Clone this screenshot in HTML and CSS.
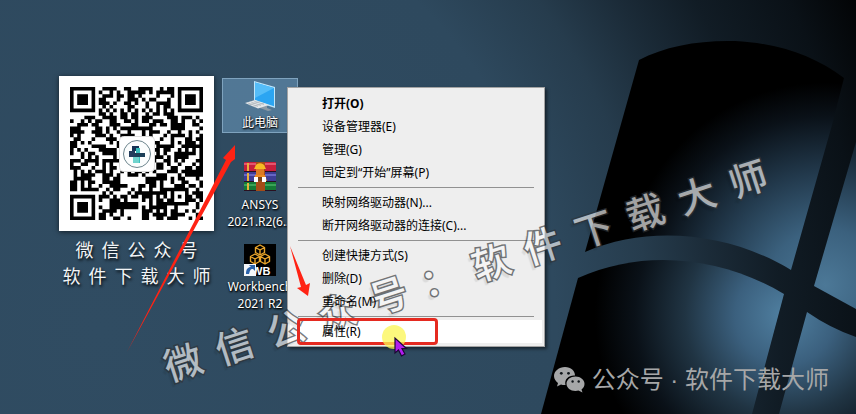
FILE: index.html
```html
<!DOCTYPE html>
<html lang="zh-CN">
<head>
    <meta charset="UTF-8">
    <meta name="viewport" content="width=device-width, initial-scale=1.0">
    <title>此电脑 - 属性</title>
    <link rel="stylesheet" href="styles.css">
</head>
<body>
    <main class="desktop">
        <svg class="wallpaper" viewBox="0 0 856 414" preserveAspectRatio="xMidYMid slice" aria-hidden="true">
            <defs>
                <radialGradient id="sky" gradientUnits="userSpaceOnUse" cx="100" cy="330" r="830">
                    <stop offset="0" stop-color="#304c62"/>
                    <stop offset="0.55" stop-color="#2e495e"/>
                    <stop offset="0.66" stop-color="#263c4d"/>
                    <stop offset="0.74" stop-color="#1b2b38"/>
                    <stop offset="0.82" stop-color="#111c25"/>
                    <stop offset="0.92" stop-color="#0a1117"/>
                    <stop offset="1" stop-color="#020304"/>
                </radialGradient>
                <radialGradient id="glow" gradientUnits="userSpaceOnUse" cx="825" cy="285" r="225">
                    <stop offset="0" stop-color="#4c7897"/>
                    <stop offset="0.25" stop-color="#3b617e"/>
                    <stop offset="0.5" stop-color="#22394c"/>
                    <stop offset="0.75" stop-color="#0a1118"/>
                    <stop offset="0.9" stop-color="#000"/>
                </radialGradient>
                <radialGradient id="glowLow" gradientUnits="userSpaceOnUse" cx="785" cy="315" r="200">
                    <stop offset="0" stop-color="#5080a1"/>
                    <stop offset="0.25" stop-color="#3b607e"/>
                    <stop offset="0.5" stop-color="#203443"/>
                    <stop offset="0.75" stop-color="#0a1118"/>
                    <stop offset="0.95" stop-color="#000"/>
                </radialGradient>
            </defs>
            <rect width="856" height="414" fill="url(#sky)"/>
            <path d="M639 60C665 46 700 40 735 41C778 43 815 56 844 78L832 125L791 270C730 233 650 224 585 252Z" fill="url(#glow)"/>
            <path d="M578 278C645 248 722 257 784 294L752 414H541Z" fill="url(#glowLow)"/>
            <path d="M856 142L814 286L856 309Z" fill="url(#glow)"/>
            <path d="M807 312Q830 328 856 337V414H779Z" fill="url(#glowLow)"/>
        </svg>

        <figure class="qr-card">
            <div class="qr-box">
                <svg class="qr-code" id="qrCode" viewBox="0 0 37 37" role="img" aria-label="微信公众号二维码"></svg>
                <svg class="qr-logo" viewBox="0 0 36 36" aria-hidden="true">
                    <rect x="0.5" y="0.5" width="35" height="35" rx="4" fill="#fff" stroke="#ddd"/>
                    <circle cx="18" cy="18" r="13.5" fill="#fbfdfd" stroke="#6d858d"/>
                    <path d="M13 10h7v5h-7z" fill="#153355"/>
                    <path d="M10 15h6v6h-6z" fill="#233c5c"/>
                    <path d="M17 12h4v15h-4z" fill="#38bdbb"/>
                    <path d="M16 17h10v4h-10z" fill="#1c3f57"/>
                    <path d="M14 21h6v6h-6z" fill="#70d4ce"/>
                </svg>
            </div>
            <figcaption class="qr-caption">
                <div class="caption-row"><span>微</span><span>信</span><span>公</span><span>众</span><span>号</span></div>
                <div class="caption-row"><span>软</span><span>件</span><span>下</span><span>载</span><span>大</span><span>师</span></div>
            </figcaption>
        </figure>

        <div class="icons">
            <button class="icon selected" type="button">
                <svg viewBox="0 0 32 32" aria-hidden="true">
                    <path d="M10 1l21 6v21l-21-7z" fill="#bfe6fb"/>
                    <path d="M11 2.5l19 5.4v18.3l-19-6.2z" fill="#2ba5f2"/>
                    <path d="M11 2.5l19 5.4-19 10z" fill="#55bdf8"/>
                    <path d="M18 24l5 1.500v2.500l5 2-4 1-8-3z" fill="#8e9ba6"/>
                    <path d="M1 23l10-3 14 5-11 3.500z" fill="#e4e7ea"/>
                    <path d="M4 23l10 3.500M7 22l10 3.600M10 21l10 3.600M5 25l11-3.500M9 26.500l11-3.500" stroke="#a3abb2" stroke-width="0.6"/>
                </svg>
                <span>此电脑</span>
            </button>
            <button class="icon" type="button">
                <svg viewBox="0 0 32 32" aria-hidden="true">
                    <rect y="0" width="32" height="10" rx="1" fill="#c51f3c"/>
                    <rect y="1" width="32" height="2" fill="#e2566d"/>
                    <rect y="10" width="32" height="10" rx="1" fill="#3d3d96"/>
                    <rect y="12" width="32" height="2" fill="#6666c4"/>
                    <rect y="20" width="32" height="9" rx="1" fill="#157a35"/>
                    <rect y="22" width="32" height="2" fill="#3ba357"/>
                    <path d="M0 9.500h32M0 19.500h32M0 28.500h32" stroke="#2a1020"/>
                    <path d="M4 1v8M4 11v8M4 21v7" stroke="#e8b23c" stroke-width="2"/>
                    <path d="M12 0h9v29h-9z" fill="#a54c17"/>
                    <path d="M11 5c1-5 9-5 10 0l1 2h-12z" fill="#f6ba23"/>
                    <path d="M12 7h8v6h-8z" fill="#dc7b23"/>
                    <path d="M11 13h10l2 6h-13z" fill="#eb8a22"/>
                    <path d="M10 15h4v5h-4zM18 15h4v5h-4z" fill="#fff"/>
                    <path d="M14 15h4v4h-4z" fill="#754118"/>
                </svg>
                <span>ANSYS<br>2021.R2(6...</span>
            </button>
            <button class="icon" type="button">
                <svg viewBox="0 0 32 32" aria-hidden="true">
                    <rect width="32" height="32" fill="#000"/>
                    <g fill="none" stroke="#e9a52b" stroke-width="1.4" stroke-linejoin="round">
                        <path id="cube" d="M16 1l4.500 2.500v5l-4.500 2.500-4.500-2.500v-5zM11.500 3.500l4.500 2.500 4.500-2.500M16 6v5"/>
                        <use href="#cube" x="-5" y="9"/>
                        <use href="#cube" x="5" y="9"/>
                    </g>
                    <text class="wb-text" x="8" y="31">WB</text>
                    <rect y="20" width="12" height="12" fill="#f4f7fa"/>
                    <path d="M2 30c0-5 2-7 5-7l-2-2h6v6l-2-2c-3 0-3 2-4 5z" fill="#2c64ab"/>
                </svg>
                <span>Workbench<br>2021 R2</span>
            </button>
        </div>

        <ul class="menu">
            <li><button class="default" type="button"><span>打开(O)</span></button></li>
            <li><button type="button"><span>设备管理器(E)</span></button></li>
            <li><button type="button"><span>管理(G)</span></button></li>
            <li><button type="button"><span>固定到“开始”屏幕(P)</span></button></li>
            <li class="line"></li>
            <li><button type="button"><span>映射网络驱动器(N)...</span></button></li>
            <li><button type="button"><span>断开网络驱动器的连接(C)...</span></button></li>
            <li class="line"></li>
            <li><button type="button"><span>创建快捷方式(S)</span></button></li>
            <li><button type="button"><span>删除(D)</span></button></li>
            <li><button type="button"><span>重命名(M)</span></button></li>
            <li class="line"></li>
            <li class="marked"><button class="active" type="button"><span>属性(R)</span></button></li>
        </ul>

        <div class="stamp"><span>微</span><span>信</span><span>公</span><span>众</span><span>号</span><span>：</span><span>软</span><span>件</span><span>下</span><span>载</span><span>大</span><span>师</span></div>

        <svg class="arrow arrow-long" viewBox="0 0 112 208" aria-hidden="true">
            <path d="M0 207L99 15l-3-2L108 0v14l-4 3z" fill="#ff2314"/>
        </svg>
        <svg class="arrow arrow-short" viewBox="0 0 22 52" aria-hidden="true">
            <path d="M0 0L16 39l4-2-2 13-11-8 4-1z" fill="#ff2314"/>
        </svg>

        <svg class="pointer" viewBox="0 0 26 34" aria-hidden="true">
            <circle cx="12" cy="13" r="12" fill="#fbf651" opacity="0.75"/>
            <path d="M13 14v15l3.500-3 3 6 3.500-2-3-5.500h4.500z" fill="#b21cf0" stroke="#1c0733" stroke-width="1.2"/>
        </svg>

        <div class="account">
            <svg viewBox="0 0 32 26" aria-hidden="true">
                <path d="M11 0C5 0 0 4 0 9c0 3 2 5.500 4 7l-1 3.500 4-2c1.500.5 3 .6 4.500.5C10 12 15 8 21 8.500 21 4 17 0 11 0z" fill="#a6a7a8"/>
                <path d="M21.500 9.500c-5 0-9 3.200-9 7.300s4 7.200 9 7.200c1 0 2-.2 3-.4l4 1.900-1-3c2-1.300 3-3.500 3-5.700 0-4-4-7.300-9-7.300z" fill="#a6a7a8"/>
                <g fill="#10151a">
                    <circle cx="7.300" cy="6.300" r="1.400"/>
                    <circle cx="14.500" cy="6.300" r="1.400"/>
                    <circle cx="18.600" cy="14.500" r="1.200"/>
                    <circle cx="24.700" cy="14.500" r="1.200"/>
                </g>
            </svg>
            <span>公众号 · 软件下载大师</span>
        </div>
    </main>

    <script src="script.js"></script>
</body>
</html>
```

FILE: styles.css
```css
body {
    font-family: "Noto Sans", "Noto Sans CJK SC", sans-serif;
    font-size: 12px;
    margin: 0;
    background-color: #304c62;
}
button {
    font: inherit;
    margin: 0;
    padding: 0;
    border: none;
    background: none;
}
.desktop {
    position: relative;
    height: 100vh;
    overflow: hidden;
}
.wallpaper {
    display: block;
    width: 100%;
    height: 100%;
}

/* QR code */
.qr-card {
    position: absolute;
    left: 59px;
    top: 76px;
    margin: 0;
}
.qr-box {
    display: grid;
    place-items: center;
    padding: 11px;
    background-color: #fff;
    box-shadow: 0 1px 5px rgba(0, 0, 0, 0.6);
}
.qr-code,
.qr-logo {
    grid-area: 1 / 1;
}
.qr-code {
    width: 133px;
    height: 133px;
}
.qr-logo {
    width: 36px;
    height: 36px;
}
.qr-caption {
    margin-top: 5px;
    color: #f2f5f7;
    font-family: "Noto Sans CJK SC", sans-serif;
    font-size: 18px;
    line-height: 26px;
    text-shadow: 1px 2px 3px #000;
}
.caption-row {
    display: flex;
    justify-content: center;
    gap: 8px;
}

/* Desktop icons */
.icons {
    position: absolute;
    left: 222px;
    top: 78px;
    display: grid;
    grid-auto-rows: 82px;
    align-items: start;
}
.icon {
    display: flex;
    flex-direction: column;
    align-items: center;
    gap: 2px;
    box-sizing: border-box;
    width: 76px;
    padding: 1px 0;
    border: 1px solid transparent;
    color: #fff;
    line-height: 17px;
    text-shadow: 1px 1px 2px #000, 0 1px 2px #000;
}
.icon svg {
    width: 32px;
    height: 32px;
}
.icon.selected {
    background-color: rgba(125, 175, 215, 0.45);
    border-color: #7fa3be;
}
.wb-text {
    fill: #fff;
    font-family: "Liberation Sans", sans-serif;
    font-size: 11px;
    font-weight: bold;
    text-shadow: none;
}

/* Context menu */
.menu {
    position: absolute;
    left: 287px;
    top: 87px;
    box-sizing: border-box;
    width: 258px;
    margin: 0;
    padding: 4px 2px 3px;
    list-style: none;
    background-color: #eee;
    border: 1px solid #a3a3a3;
    box-shadow: 2px 2px 3px rgba(0, 0, 0, 0.5);
}
.menu button {
    display: block;
    width: 100%;
    padding-left: 32px;
    color: #000;
    line-height: 23px;
    text-align: left;
}
.menu button span {
    position: relative;
    z-index: 3;
}
.menu .default {
    font-weight: bold;
}
.menu .active {
    background-color: #fff;
}
.menu .line {
    height: 1px;
    margin: 3px 8px;
    background-color: #919191;
}
.menu .marked {
    position: relative;
}
.menu .marked::after {
    content: "";
    position: absolute;
    z-index: 4;
    inset: -2px 104px -2px 7px;
    border: 3px solid #e52a20;
    border-radius: 4px;
}

/* Slanted text across the desktop */
.stamp {
    position: absolute;
    z-index: 2;
    left: 148px;
    top: 241px;
    display: flex;
    gap: 14px;
    color: #f8f8f8;
    font-family: "Noto Sans CJK SC", sans-serif;
    font-size: 38px;
    font-weight: 500;
    line-height: 56px;
    white-space: nowrap;
    -webkit-text-stroke: 3px #303438;
    paint-order: stroke fill;
    text-shadow: -4px 3px 1px rgba(0, 0, 0, 0.12);
    opacity: 0.65;
    transform: rotate(-18deg);
}
.stamp span {
    width: 40px;
    text-align: center;
}

.arrow,
.pointer {
    position: absolute;
    z-index: 5;
}
.arrow-long {
    left: 127px;
    top: 145px;
    width: 112px;
}
.arrow-short {
    left: 290px;
    top: 246px;
    width: 22px;
}
.pointer {
    left: 382px;
    top: 324px;
    width: 26px;
}

.account {
    position: absolute;
    right: 27px;
    bottom: 16px;
    display: flex;
    align-items: center;
    gap: 6px;
    color: #a6a7a8;
    font-family: "Liberation Sans", "Noto Sans CJK SC", sans-serif;
    font-size: 24px;
    line-height: 36px;
}
.account svg {
    width: 32px;
}
```

FILE: script.js
```js
const SIZE = 37;
const qr = document.getElementById('qrCode');

// Nested squares: corner markers and the small alignment mark
function ring(x, y, left, top, size) {
    const d = Math.max(Math.abs(x - left - (size - 1) / 2), Math.abs(y - top - (size - 1) / 2));
    const half = (size - 1) / 2;
    if (size === 7) return d > half + 1 ? null : d === 3 || d < 2;
    return d > half ? null : d !== 1;
}

let seed = 20212;
function noise() {
    seed = (seed * 16807) % 2147483647;
    return seed / 2147483647 < 0.52;
}

let path = '';
for (let y = 0; y < SIZE; y++) {
    for (let x = 0; x < SIZE; x++) {
        const filler = noise();
        const marks = [
            ring(x, y, 0, 0, 7),
            ring(x, y, SIZE - 7, 0, 7),
            ring(x, y, 0, SIZE - 7, 7),
            ring(x, y, SIZE - 9, SIZE - 9, 5)
        ];
        let dark = marks.find(m => m !== null);
        if (dark === undefined) {
            dark = x === 6 || y === 6 ? (x + y) % 2 === 0 : filler;
        }
        if (dark) path += `M${x} ${y}h1v1h-1z`;
    }
}

const modules = document.createElementNS('http://www.w3.org/2000/svg', 'path');
modules.setAttribute('d', path);
modules.setAttribute('fill', '#000');
qr.appendChild(modules);
```
